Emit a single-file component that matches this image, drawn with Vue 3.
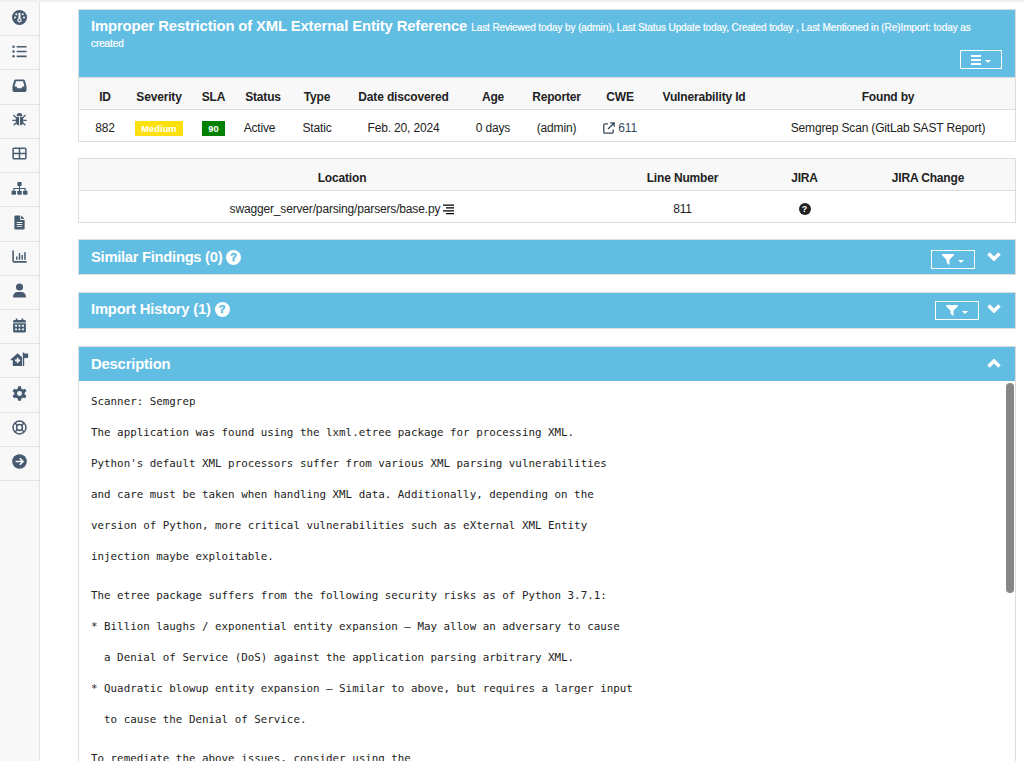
<script setup>
const menu = [
  'dashboard', 'list', 'inbox', 'bug', 'table', 'sitemap', 'file',
  'chart', 'user', 'calendar', 'house', 'gear', 'ring', 'arrow'
]

const finding = [
  { label: 'ID', value: '882' },
  { label: 'Severity', value: 'Medium', badge: 'medium' },
  { label: 'SLA', value: '90', badge: 'sla' },
  { label: 'Status', value: 'Active', status: true },
  { label: 'Type', value: 'Static' },
  { label: 'Date discovered', value: 'Feb. 20, 2024' },
  { label: 'Age', value: '0 days' },
  { label: 'Reporter', value: '(admin)' },
  { label: 'CWE', value: '611', link: true },
  { label: 'Vulnerability Id', value: '' },
  { label: 'Found by', value: 'Semgrep Scan (GitLab SAST Report)' }
]

const collapsed = [
  { title: 'Similar Findings (0)', name: 'similar' },
  { title: 'Import History (1)', name: 'history' }
]

const description = [
  [
    'Scanner: Semgrep',
    'The application was found using the lxml.etree package for processing XML.',
    "Python's default XML processors suffer from various XML parsing vulnerabilities",
    'and care must be taken when handling XML data. Additionally, depending on the',
    'version of Python, more critical vulnerabilities such as eXternal XML Entity',
    'injection maybe exploitable.'
  ],
  [
    'The etree package suffers from the following security risks as of Python 3.7.1:',
    '* Billion laughs / exponential entity expansion – May allow an adversary to cause',
    '  a Denial of Service (DoS) against the application parsing arbitrary XML.',
    '* Quadratic blowup entity expansion – Similar to above, but requires a larger input',
    '  to cause the Denial of Service.'
  ],
  ['To remediate the above issues, consider using the']
]
</script>

<template>
  <div class="page">
    <nav class="sidebar">
      <a v-for="name in menu" :key="name" class="menu-item">
        <svg viewBox="0 0 16 16" class="menu-icon">
          <g v-if="name === 'dashboard'">
            <circle cx="8" cy="8" r="8" />
            <g class="cut">
              <rect x="6.9" y="2.8" width="2.2" height="7" rx="1" />
              <circle cx="8" cy="11" r="2.3" />
              <circle cx="4.6" cy="4.600" r="1.100" />
              <circle cx="11.400" cy="4.600" r="1.100" />
              <circle cx="3.200" cy="8" r="1.100" />
              <circle cx="12.800" cy="8" r="1.100" />
            </g>
            <circle cx="8" cy="11" r="1.100" />
          </g>
          <g v-else-if="name === 'list'">
            <path d="M5 2h10.500v1.800H5zM5 7.100h10.500v1.800H5zM5 12.200h10.500V14H5z" />
            <circle cx="1.600" cy="2.900" r="1.300" />
            <circle cx="1.600" cy="8" r="1.300" />
            <circle cx="1.600" cy="13.100" r="1.300" />
          </g>
          <path
            v-else-if="name === 'inbox'"
            fill-rule="evenodd"
            d="M4 1.500h8a1.800 1.800 0 0 1 1.800 1.400L15.500 9v4a1.800 1.800 0 0 1-1.800 1.800H2.300A1.800 1.800 0 0 1 .5 13V9l1.700-6.100A1.800 1.800 0 0 1 4 1.500zM4.200 3.500L2.700 9h2.100l1.100 2h4.200l1.100-2h2.100l-1.500-5.500z"
          />
          <g v-else-if="name === 'bug'">
            <path d="M5 4a3 3 0 0 1 6 0v.4H5zM4 5.300h3.500v9C5.200 14 4 12.200 4 10zM8.500 5.300H12V10c0 2.200-1.200 4-3.500 4.300z" />
            <path class="line" d="M1.500 3.200L4.400 6M14.500 3.200L11.600 6M.3 9H4M12 9h3.700M1.800 14.200l2.800-2.700M14.200 14.200l-2.800-2.700" />
          </g>
          <path
            v-else-if="name === 'table'"
            fill-rule="evenodd"
            d="M2.200 1.500h11.600a1.800 1.800 0 0 1 1.800 1.800v9.400a1.800 1.800 0 0 1-1.800 1.800H2.200a1.800 1.800 0 0 1-1.800-1.800V3.300a1.800 1.800 0 0 1 1.800-1.800zM2 3.200v4h5.200v-4zM8.800 3.200v4H14v-4zM2 8.800v4h5.200v-4zM8.800 8.800v4H14v-4z"
          />
          <g v-else-if="name === 'sitemap'">
            <rect x="5.700" y="1" width="4.600" height="4.400" rx=".8" />
            <rect x="-.5" y="10.300" width="4.800" height="4.400" rx=".8" />
            <rect x="5.600" y="10.300" width="4.800" height="4.400" rx=".8" />
            <rect x="11.700" y="10.300" width="4.800" height="4.400" rx=".8" />
            <path class="line thin" d="M8 5v6M2 11V8h12v3" />
          </g>
          <g v-else-if="name === 'file'">
            <path d="M4 .5h4.700v4.800h4.800V14A1.500 1.500 0 0 1 12 15.500H4A1.500 1.500 0 0 1 2.500 14V2A1.500 1.500 0 0 1 4 .5zM9.700.5l3.800 3.800H9.700z" />
            <path class="cut" d="M5 7.500h6v1H5zM5 9.700h6v1H5zM5 11.900h6v1H5z" />
          </g>
          <path
            v-else-if="name === 'chart'"
            d="M.3 1.500H2v10.800c0 .4.200.6.600.6h13v1.700H2.300a2 2 0 0 1-2-2zM4.300 8h1.600v3.500H4.300zM7.200 4.500h1.600v7H7.200zM10.100 6.300h1.600v5.200h-1.600zM13 3.500h1.600v8H13z"
          />
          <g v-else-if="name === 'user'">
            <circle cx="8" cy="4.300" r="3.800" />
            <path d="M1.200 15.500v-1.400a4.700 4.700 0 0 1 4.700-4.600h4.200a4.700 4.700 0 0 1 4.700 4.600v1.400z" />
          </g>
          <g v-else-if="name === 'calendar'">
            <path d="M4 .4h1.800V2h4.400V.4H12V2h1.300a1.500 1.500 0 0 1 1.500 1.500v1.300H1.200V3.500A1.500 1.500 0 0 1 2.700 2H4zM1.200 5.700h13.600V14a1.500 1.500 0 0 1-1.500 1.500H2.700A1.500 1.500 0 0 1 1.200 14z" />
            <path class="cut" d="M3.300 7.300h2v1.900h-2zM7 7.300h2v1.900H7zM10.700 7.300h2v1.900h-2zM3.300 11.200h2v1.900h-2zM7 11.200h2v1.900H7zM10.700 11.200h2v1.900h-2z" />
          </g>
          <g v-else-if="name === 'house'">
            <path d="M-1.600 8L6 1.300 10.700 5.500V15H.8V8.900H-1.200zM11.500.5H13v1h4.200v5H13V15h-1.500z" />
            <path class="cut" d="M5.100 6.200h1.800v1.900h1.900v1.800H6.900v1.900H5.100V9.900H3.200V8.100h1.900z" />
          </g>
          <g v-else-if="name === 'gear'">
            <circle cx="8" cy="8" r="5.500" />
            <path d="M6.500.3h3l.5 3H6zM6 12.700h4l-.5 3h-3zM.6 5.500L2.100 2.900 5 4 3 7.500zM13 8.500l2.400 2-1.500 2.600L11 12zM15.400 5.500L13.900 2.900 11 4l2 3.500zM3 8.500l-2.400 2 1.500 2.600L5 12z" />
            <circle class="cut" cx="8" cy="8" r="2.600" />
          </g>
          <g v-else-if="name === 'ring'" class="outline">
            <circle cx="8" cy="8" r="6.900" />
            <circle cx="8" cy="8" r="3.100" />
            <path d="M3.200 3.200l2.600 2.600M12.800 3.200l-2.600 2.600M3.200 12.800l2.600-2.600M12.800 12.800l-2.600-2.600" />
          </g>
          <g v-else>
            <circle cx="8" cy="8" r="7.800" />
            <path class="cut-line" d="M3.800 8h7.800M8.300 4.500L11.800 8l-3.500 3.500" />
          </g>
        </svg>
      </a>
    </nav>

    <main class="content">
      <section class="panel finding">
        <header class="finding-heading">
          <h4>
            Improper Restriction of XML External Entity Reference
            <small>Last Reviewed today by (admin), Last Status Update today, Created today , Last Mentioned in (Re)Import: today as created</small>
          </h4>
          <button class="tool-button">
            <svg viewBox="0 0 10 10" class="bars"><path d="M0 0h10v2H0zM0 4h10v2H0zM0 8h10v2H0z" /></svg>
            <span class="caret"></span>
          </button>
        </header>
        <div class="grid finding-grid head">
          <div v-for="col in finding" :key="col.label">{{ col.label }}</div>
        </div>
        <div class="grid finding-grid row">
          <div v-for="col in finding" :key="col.label" :class="{ status: col.status }">
            <span v-if="col.badge" class="badge" :class="col.badge">{{ col.value }}</span>
            <a v-else-if="col.link" class="cwe">
              <svg viewBox="0 0 12 12"><path d="M5 1.800H2A1.200 1.200 0 0 0 .8 3v7A1.200 1.200 0 0 0 2 11.200h7A1.200 1.200 0 0 0 10.200 10V7.500M7.300.8h3.900v3.900M11 1L5 7" /></svg>
              {{ col.value }}
            </a>
            <template v-else>{{ col.value }}</template>
          </div>
        </div>
      </section>

      <section class="panel location">
        <div class="grid location-grid head">
          <div>Location</div>
          <div>Line Number</div>
          <div>JIRA</div>
          <div>JIRA Change</div>
        </div>
        <div class="grid location-grid row">
          <div>
            swagger_server/parsing/parsers/base.py
            <svg viewBox="0 0 11 11" class="align"><path d="M0 .5h11v1.200H0zM3 3.300h8v1.200H3zM0 6.200h11v1.200H0zM3 9h8v1.200H3z" /></svg>
          </div>
          <div>811</div>
          <div><span class="help dark">?</span></div>
          <div></div>
        </div>
      </section>

      <section v-for="panel in collapsed" :key="panel.name" class="panel collapsed" :class="panel.name">
        <h4>{{ panel.title }} <span class="help">?</span></h4>
        <button class="tool-button filter">
          <svg viewBox="0 0 12 11" class="funnel"><path d="M.2 0h11.600v1.200L7.500 5.700V11L4.500 8.800V5.700L.2 1.200z" /></svg>
          <span class="caret"></span>
        </button>
        <svg viewBox="0 0 14 9" class="chevron"><path d="M1.500 1.500L7 7l5.500-5.500" /></svg>
      </section>

      <section class="panel description">
        <header class="description-heading">
          <h4>Description</h4>
          <svg viewBox="0 0 14 9" class="chevron"><path d="M1.500 7.500L7 2l5.500 5.500" /></svg>
        </header>
        <div class="description-body">
          <div class="text">
            <div v-for="(block, i) in description" :key="i" class="block">
              <div v-for="line in block" :key="line" class="code-line">{{ line }}</div>
            </div>
          </div>
          <div class="scrollbar"></div>
        </div>
      </section>
    </main>
  </div>
</template>

<style>
body {
  margin: 0;
  overflow: hidden;
}
</style>

<style scoped>
.page {
  display: flex;
  box-sizing: border-box;
  height: 761px;
  overflow: hidden;
  border-top: 2px solid #efefef;
  background: #fff;
  color: #222;
  font: 12px "Liberation Sans", Arial, sans-serif;
  letter-spacing: -0.16px;
}

h4 {
  margin: 0;
  color: #fff;
  font-size: 14.8px;
  font-weight: bold;
  letter-spacing: -0.3px;
}

/* Sidebar */
.sidebar {
  flex: 0 0 39px;
  background: #f8f8f8;
  border-right: 1px solid #e3e3e3;
}

.menu-item {
  display: flex;
  align-items: center;
  justify-content: center;
  box-sizing: border-box;
  height: 34.23px;
  padding-bottom: 3px;
  border-bottom: 1px solid #e3e3e3;
}

.menu-icon {
  width: 15px;
  height: 15px;
  overflow: visible;
  fill: #475b70;
}

.cut {
  fill: #f8f8f8;
}

.line {
  fill: none;
  stroke: #475b70;
  stroke-width: 1.4;
}

.thin {
  stroke-width: 1.2;
}

.outline {
  fill: none;
  stroke: #475b70;
  stroke-width: 1.6;
}

.cut-line {
  fill: none;
  stroke: #f8f8f8;
  stroke-width: 1.7;
}

/* Panels */
.content {
  flex: 1;
  display: flex;
  flex-direction: column;
  padding: 7px 8px 0 38px;
}

.panel {
  flex: none;
  box-sizing: border-box;
  border: 1px solid #ddd;
}

.finding {
  height: 133px;
}

.finding-heading {
  display: flex;
  flex-direction: column;
  box-sizing: border-box;
  height: 68px;
  padding: 9px 13px 0 12px;
  background: #62bde3;
  border-bottom: 1px solid #ddd;
}

.finding-heading h4 {
  height: 31px;
  line-height: 15.5px;
  letter-spacing: -0.11px;
}

.finding-heading small {
  font-size: 10px;
  font-weight: normal;
  letter-spacing: -0.09px;
  line-height: 1;
  -webkit-text-stroke: 0.2px #fff;
}

.finding-heading .tool-button {
  align-self: flex-end;
}

.tool-button {
  display: flex;
  align-items: center;
  justify-content: center;
  gap: 4px;
  box-sizing: border-box;
  width: 42px;
  height: 19px;
  padding: 0;
  background: transparent;
  border: 1px solid #fff;
}

.bars {
  width: 10px;
  height: 10px;
  fill: #fff;
}

.caret {
  margin-top: 3px;
  border: 3px solid transparent;
  border-top: 3px solid #fff;
  border-bottom: 0;
}

.grid {
  display: grid;
  box-sizing: border-box;
  height: 32px;
  text-align: center;
  white-space: nowrap;
  line-height: 37px;
}

.finding-grid {
  grid-template-columns: 44px 72px 37px 62px 46px 127px 52px 75px 52px 116px 252px;
}

.finding-grid > :first-child {
  padding-left: 8px;
}

.head {
  background: #f8f8f8;
  border-bottom: 1px solid #ddd;
  font-weight: bold;
  line-height: 38px;
}

.status {
  padding-right: 7px;
}

.badge {
  display: inline-block;
  height: 15px;
  padding: 0 6px;
  color: #fff;
  font-size: 9.4px;
  font-weight: bold;
  letter-spacing: 0;
  line-height: 16px;
}

.medium {
  background: #fde10f;
}

.sla {
  background: #008000;
}

.cwe {
  color: #34495e;
}

.cwe svg {
  width: 12px;
  height: 12px;
  vertical-align: -2px;
  fill: none;
  stroke: #34495e;
  stroke-width: 1.3;
}

.location {
  height: 65px;
  margin-top: 16px;
}

.location-grid {
  grid-template-columns: 526px 155px 89px 165px;
}

.location-grid.row {
  line-height: 36px;
}

.location-grid > :last-child {
  padding-right: 7px;
}

.align {
  width: 11px;
  height: 11px;
  vertical-align: -2px;
}

.help {
  display: inline-block;
  width: 15px;
  height: 15px;
  border-radius: 50%;
  background: #fff;
  color: #62bde3;
  font-size: 11px;
  font-weight: bold;
  letter-spacing: 0;
  line-height: 15px;
  text-align: center;
  vertical-align: 1px;
  -webkit-text-stroke: 0.5px #62bde3;
}

.help.dark {
  width: 12px;
  height: 12px;
  background: #222;
  color: #fff;
  font-size: 9px;
  line-height: 12px;
  vertical-align: 1px;
  -webkit-text-stroke: 0;
}

/* Collapsed panels */
.collapsed {
  display: flex;
  align-items: flex-start;
  height: 36px;
  margin-top: 16px;
  padding: 0 14px 0 12px;
  background: #62bde3;
}

.collapsed h4 {
  flex: 1;
  line-height: 34px;
}

.filter {
  width: 44px;
  margin: 10px 12px 0 0;
}

.history {
  height: 37px;
  margin-top: 17px;
}

.history h4 {
  letter-spacing: -0.2px;
  line-height: 33px;
}

.history .filter {
  margin: 8px 8px 0 0;
}

.history .chevron {
  margin-top: 11px;
}

.funnel {
  width: 12px;
  height: 11px;
  fill: #fff;
}

.chevron {
  width: 14px;
  height: 9px;
  margin-top: 12px;
  fill: none;
  stroke: #fff;
  stroke-width: 3.6;
}

/* Description */
.description {
  display: flex;
  flex: 1;
  flex-direction: column;
  min-height: 0;
  margin-top: 17px;
  border-bottom: 0;
}

.description-heading {
  display: flex;
  flex: none;
  justify-content: space-between;
  height: 34px;
  padding: 0 14px 0 12px;
  background: #62bde3;
  line-height: 34px;
}

.description-heading h4 {
  letter-spacing: -0.18px;
}

.description-body {
  display: flex;
  flex: 1;
  justify-content: space-between;
  min-height: 0;
  overflow: hidden;
}

.text {
  padding: 5px 0 0 12px;
  font-family: "DejaVu Sans Mono", monospace;
  font-size: 10.85px;
  letter-spacing: 0;
  line-height: 31px;
  white-space: pre;
}

.block {
  margin-bottom: 8px;
}

.scrollbar {
  width: 8px;
  height: 210px;
  margin: 2px 1px 0 0;
  border-radius: 4px;
  background: #878787;
}
</style>
